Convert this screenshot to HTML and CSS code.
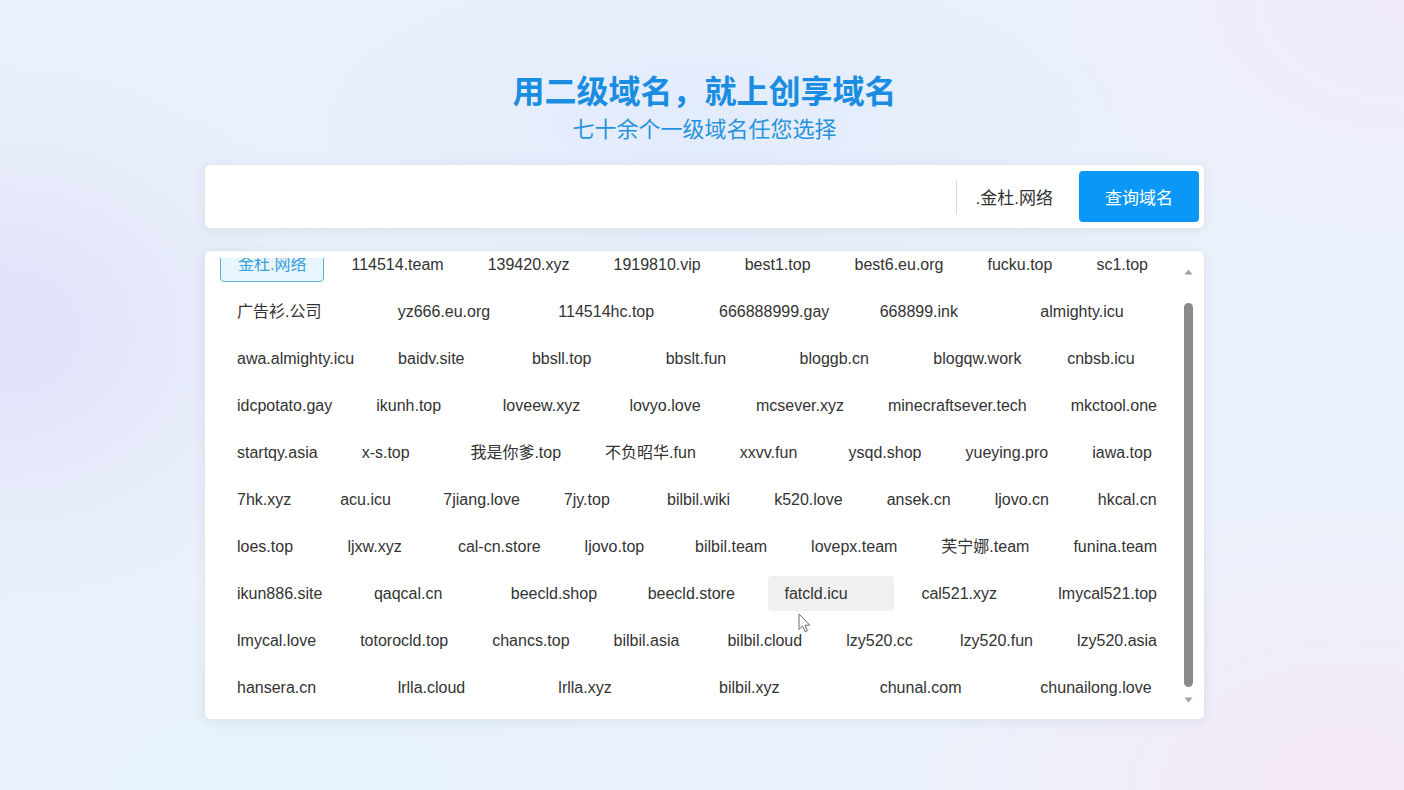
FILE: index.html
```html
<!DOCTYPE html>
<html lang="zh-CN">
<head>
<meta charset="utf-8">
<title>创享域名</title>
<link rel="stylesheet" href="styles.css">
</head>
<body>
<div class="page">
  <h1 class="title">用二级域名，就上创享域名</h1>
  <p class="subtitle">七十余个一级域名任您选择</p>

  <div class="search">
    <input class="search-input" type="text" aria-label="域名前缀">
    <span class="divider"></span>
    <span class="suffix">.金杜.网络</span>
    <button class="search-btn" type="button">查询域名</button>
  </div>

  <div class="domain-card">
    <div class="list">
      <div class="items">
        <div class="item active">金杜.网络</div>
        <div class="item">114514.team</div>
        <div class="item">139420.xyz</div>
        <div class="item">1919810.vip</div>
        <div class="item">best1.top</div>
        <div class="item">best6.eu.org</div>
        <div class="item">fucku.top</div>
        <div class="item">sc1.top</div>
        <div class="item">广告衫.公司</div>
        <div class="item">yz666.eu.org</div>
        <div class="item">114514hc.top</div>
        <div class="item">666888999.gay</div>
        <div class="item">668899.ink</div>
        <div class="item">almighty.icu</div>
        <div class="item">awa.almighty.icu</div>
        <div class="item">baidv.site</div>
        <div class="item">bbsll.top</div>
        <div class="item">bbslt.fun</div>
        <div class="item">bloggb.cn</div>
        <div class="item">blogqw.work</div>
        <div class="item">cnbsb.icu</div>
        <div class="item">idcpotato.gay</div>
        <div class="item">ikunh.top</div>
        <div class="item">loveew.xyz</div>
        <div class="item">lovyo.love</div>
        <div class="item">mcsever.xyz</div>
        <div class="item">minecraftsever.tech</div>
        <div class="item">mkctool.one</div>
        <div class="item">startqy.asia</div>
        <div class="item">x-s.top</div>
        <div class="item">我是你爹.top</div>
        <div class="item">不负昭华.fun</div>
        <div class="item">xxvv.fun</div>
        <div class="item">ysqd.shop</div>
        <div class="item">yueying.pro</div>
        <div class="item">iawa.top</div>
        <div class="item">7hk.xyz</div>
        <div class="item">acu.icu</div>
        <div class="item">7jiang.love</div>
        <div class="item">7jy.top</div>
        <div class="item">bilbil.wiki</div>
        <div class="item">k520.love</div>
        <div class="item">ansek.cn</div>
        <div class="item">ljovo.cn</div>
        <div class="item">hkcal.cn</div>
        <div class="item">loes.top</div>
        <div class="item">ljxw.xyz</div>
        <div class="item">cal-cn.store</div>
        <div class="item">ljovo.top</div>
        <div class="item">bilbil.team</div>
        <div class="item">lovepx.team</div>
        <div class="item">芙宁娜.team</div>
        <div class="item">funina.team</div>
        <div class="item">ikun886.site</div>
        <div class="item">qaqcal.cn</div>
        <div class="item">beecld.shop</div>
        <div class="item">beecld.store</div>
        <div class="item hover">fatcld.icu<svg class="cursor" width="13" height="20" viewBox="0 0 13 20"><path d="M1 1 L1 16.5 L4.6 13 L7.1 18.8 L9.4 17.8 L7 12.2 L11.8 12.2 Z" fill="#fff" stroke="#6a6a6a" stroke-width="1" stroke-linejoin="round"/></svg></div>
        <div class="item">cal521.xyz</div>
        <div class="item">lmycal521.top</div>
        <div class="item">lmycal.love</div>
        <div class="item">totorocld.top</div>
        <div class="item">chancs.top</div>
        <div class="item">bilbil.asia</div>
        <div class="item">bilbil.cloud</div>
        <div class="item">lzy520.cc</div>
        <div class="item">lzy520.fun</div>
        <div class="item">lzy520.asia</div>
        <div class="item">hansera.cn</div>
        <div class="item">lrlla.cloud</div>
        <div class="item">lrlla.xyz</div>
        <div class="item">bilbil.xyz</div>
        <div class="item">chunal.com</div>
        <div class="item">chunailong.love</div>
      </div>
    </div>
    <div class="scrollbar">
      <div class="sb-btn"><svg width="9" height="6" viewBox="0 0 9 6"><path d="M4.5 0.5 L8.5 5.5 L0.5 5.5 Z" fill="#a2a2a2"/></svg></div>
      <div class="sb-track"><div class="sb-thumb"></div></div>
      <div class="sb-btn"><svg width="9" height="6" viewBox="0 0 9 6"><path d="M0.5 0.5 L8.5 0.5 L4.5 5.5 Z" fill="#a2a2a2"/></svg></div>
    </div>
  </div>
</div>
</body>
</html>
```

FILE: styles.css
```css
* {
  box-sizing: border-box;
}

html, body {
  margin: 0;
}

body {
  min-height: 790px;
  padding-left: 5px;
  font-family: "Liberation Sans", "Noto Sans CJK SC", sans-serif;
  color: #333;
  background:
    radial-gradient(ellipse 520px 420px at 0% 42%, rgba(222, 224, 248, 0.9), rgba(222, 224, 248, 0) 70%),
    radial-gradient(ellipse 520px 360px at 100% 0%, rgba(241, 234, 249, 0.95), rgba(241, 234, 249, 0) 70%),
    radial-gradient(ellipse 620px 420px at 96% 100%, rgba(246, 232, 246, 0.95), rgba(246, 232, 246, 0) 70%),
    radial-gradient(ellipse 720px 300px at 50% 16%, rgba(226, 235, 252, 0.95), rgba(226, 235, 252, 0) 70%),
    radial-gradient(ellipse 600px 300px at 20% 100%, rgba(230, 242, 250, 0.9), rgba(230, 242, 250, 0) 70%),
    #ebf2fb;
}

.page {
  width: 1001px;
  margin: 0 auto;
  padding-top: 72px;
}

.title {
  margin: 0;
  font-size: 32px;
  line-height: 40px;
  font-weight: 700;
  text-align: center;
  color: #1a8de3;
}

.subtitle {
  margin: 3px 0 0;
  font-size: 22px;
  line-height: 30px;
  text-align: center;
  color: #2893dc;
}

/* search bar */
.search {
  margin-top: 19px;
  height: 65px;
  display: flex;
  align-items: center;
  padding: 6px 5px 6px 0;
  background: #fff;
  border: 1px solid #e2e5ec;
  border-radius: 6px;
  box-shadow: 0 2px 12px rgba(120, 140, 180, 0.14);
}

.search-input {
  flex: 1;
  align-self: stretch;
  border: none;
  outline: none;
  background: transparent;
  font: inherit;
  padding: 0 18px;
}

.divider {
  width: 1px;
  height: 34px;
  background: #dcdcdc;
}

.suffix {
  padding: 0 26px 0 19px;
  font-size: 17px;
  color: #333;
  white-space: nowrap;
}

.search-btn {
  width: 120px;
  height: 51px;
  border: none;
  border-radius: 4px;
  background: #0a97f6;
  color: #fff;
  font-family: inherit;
  font-size: 17px;
  cursor: pointer;
}

/* domain list */
.domain-card {
  margin-top: 21px;
  height: 470px;
  display: flex;
  background: #fff;
  border: 1px solid #e2e5ec;
  border-radius: 6px;
  box-shadow: 0 2px 12px rgba(120, 140, 180, 0.14);
}

.list {
  flex: 1;
  display: flex;
  flex-direction: column;
  justify-content: flex-end;
  overflow: hidden;
  margin: 7px 0;
  padding-left: 10px;
}

.items {
  flex-shrink: 0;
  display: flex;
  flex-wrap: wrap;
  padding: 20px 0 1px;
}

.item {
  position: relative;
  flex: 1 1 0;
  margin: 6px 5px;
  padding: 0 17px;
  height: 35px;
  line-height: 35px;
  font-size: 16px;
  white-space: nowrap;
  color: #333;
  border-radius: 4px;
}

.item.active {
  border: 1px solid #62acd6;
  background: #e7f5fc;
  color: #3a9fd9;
  line-height: 33px;
}

.item.hover {
  background: #f0f0f0;
}

.cursor {
  position: absolute;
  left: 30px;
  top: 37px;
}

/* scrollbar */
.scrollbar {
  width: 16px;
  margin: 12px 8px 11px 1px;
  display: flex;
  flex-direction: column;
}

.sb-btn {
  height: 17px;
  display: flex;
  align-items: center;
  justify-content: center;
}

.sb-track {
  flex: 1;
  display: flex;
  flex-direction: column;
  justify-content: flex-end;
  align-items: center;
  padding-bottom: 4px;
}

.sb-thumb {
  width: 9px;
  height: 384px;
  border-radius: 5px;
  background: #8b8b8b;
}
```
